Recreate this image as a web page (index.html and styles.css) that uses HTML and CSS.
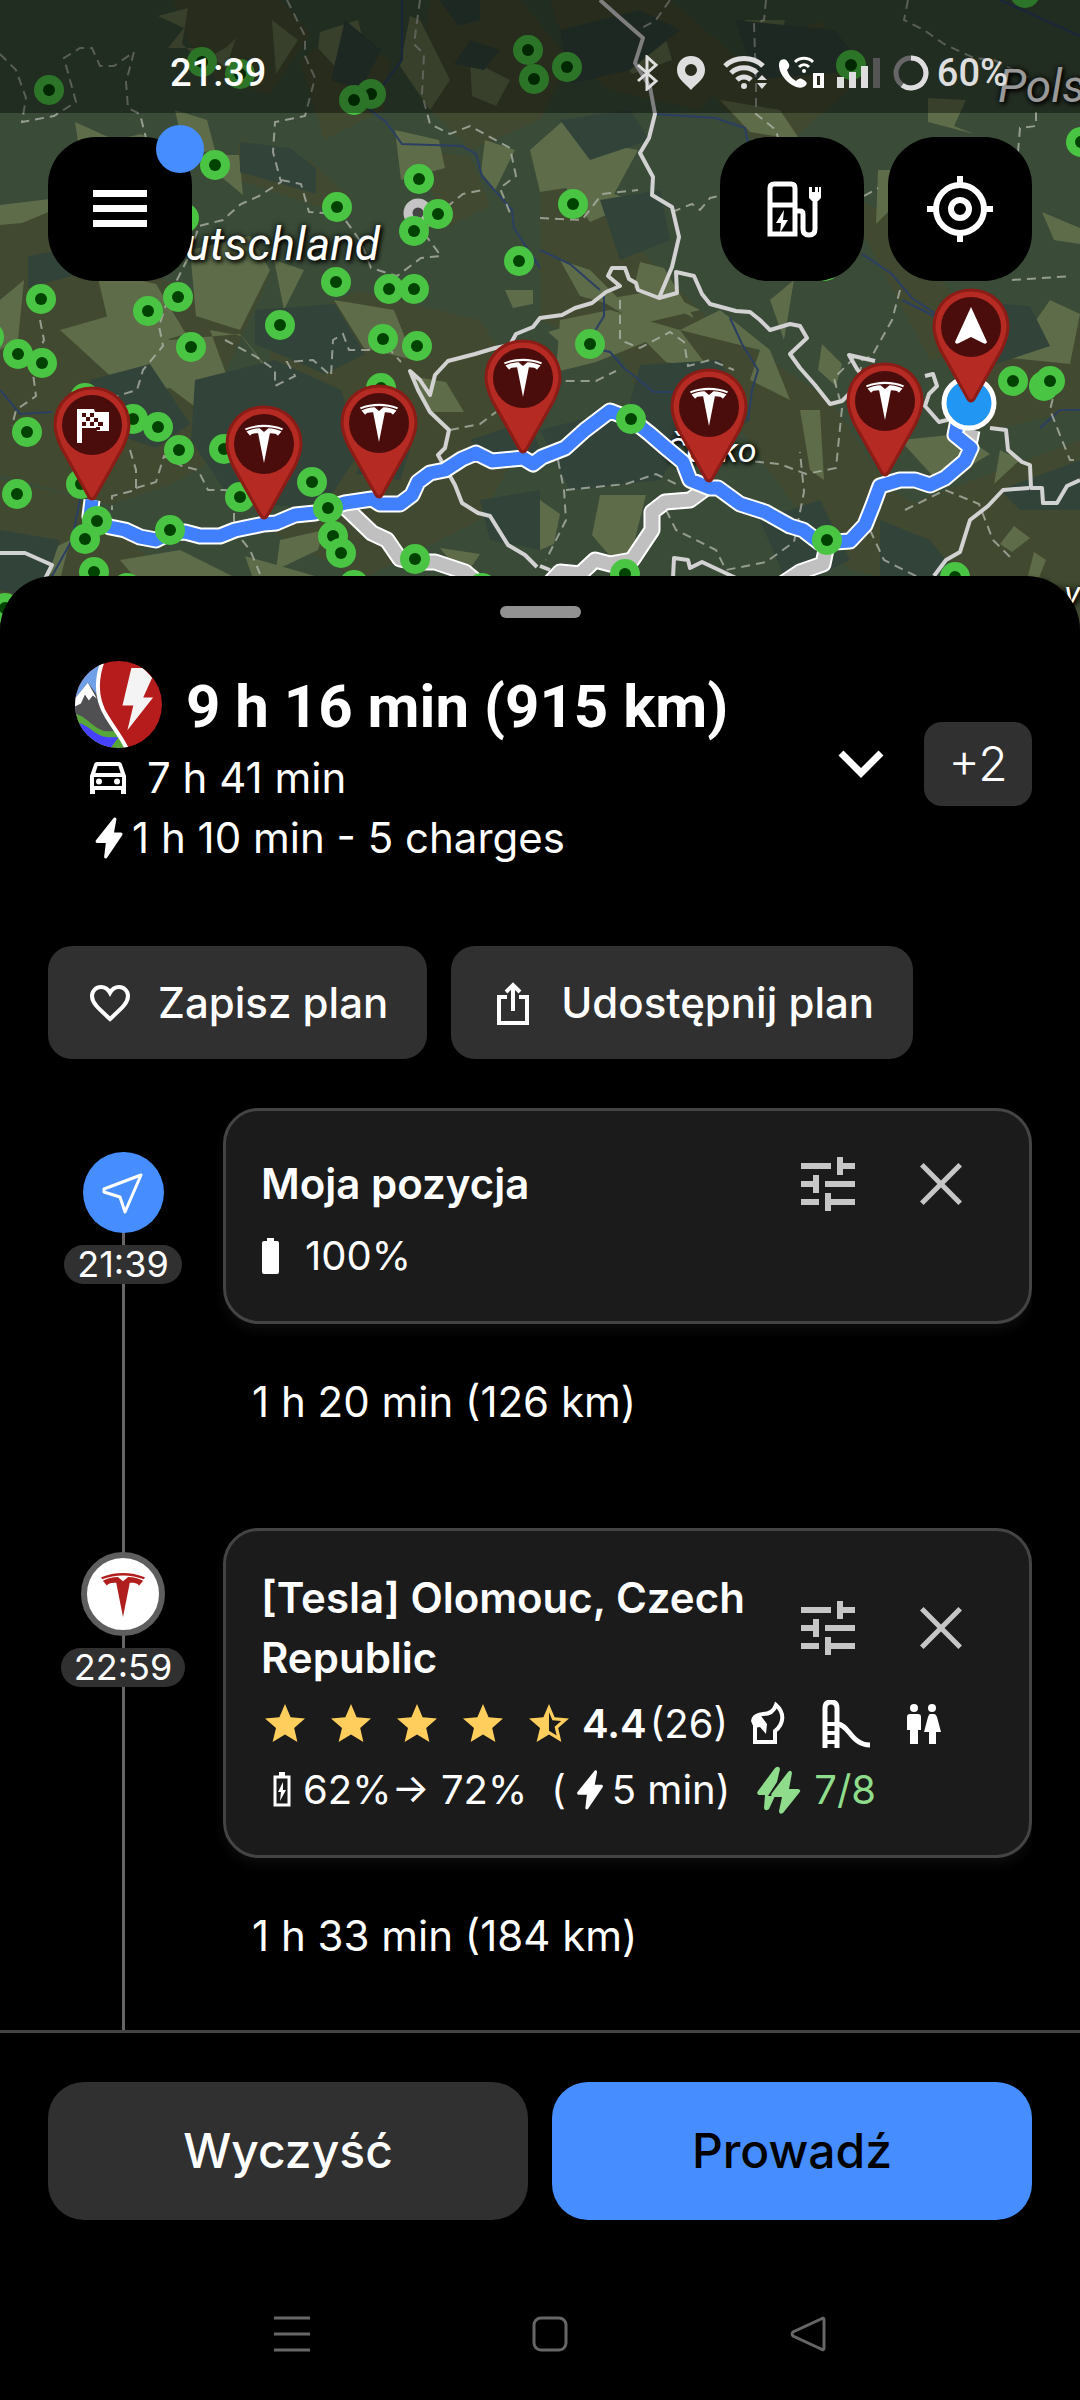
FILE: index.html
```html
<!DOCTYPE html>
<html lang="pl">
<head>
    <meta charset="UTF-8">
    <meta name="viewport" content="width=device-width, initial-scale=1.0">
    <title>Plan podróży</title>
    <link rel="stylesheet" href="styles.css">
</head>
<body>

<!-- Shared icons -->
<svg class="sprite" aria-hidden="true">
    <symbol id="i-tune" viewBox="0 0 24 24"><path d="M3 17v2h6v-2H3M3 5v2h10V5H3m10 16v-2h8v-2h-8v-2h-2v6h2M7 9v2H3v2h4v2h2V9H7m14 4v-2H11v2h10m-6-4h2V7h4V5h-4V3h-2v6z"/></symbol>
    <symbol id="i-close" viewBox="0 0 24 24"><path d="M19 6.2 17.8 5 12 10.8 6.2 5 5 6.2 10.8 12 5 17.8 6.2 19 12 13.2 17.8 19 19 17.8 13.2 12z"/></symbol>
    <symbol id="i-star" viewBox="0 0 24 24"><path d="M12 17.3 18.2 21l-1.6-7L22 9.2l-7.2-.6L12 2 9.200 8.600 2 9.200 7.500 14l-1.700 7z"/></symbol>
    <symbol id="i-star-half" viewBox="0 0 24 24"><path d="M12 15.400V6.100l1.700 4 4.400.400-3.300 2.900 1 4.300M22 9.200l-7.200-.600L12 2 9.200 8.600 2 9.200 7.500 14l-1.700 7 6.200-3.700 6.200 3.700-1.600-7z"/></symbol>
    <symbol id="i-bolt" viewBox="0 0 24 24"><path d="M14.600 2.300c.5-1 1.800-.6 1.600.5L15 9.200h3.300c.9 0 1.200.7.800 1.400L11.600 21.700c-.6.9-1.700.5-1.500-.5l.8-6.700H6.700c-.8 0-1.100-.7-.8-1.300z"/></symbol>
    <symbol id="i-tesla" viewBox="0 0 40 40"><path d="M1 5.500C13 .5 27 .5 39 5.500l-.8 1.700C27 2.800 13 2.800 1.800 7.200zM2.500 8.500C6 6.600 11 5.300 15.500 5.200L20 9l4.500-3.800c4.500.1 9.500 1.400 13 3.300l-3.600 4.300c-.7-1.900-3.500-2.600-8-2.600L20 40l-5.900-29.800c-4.500 0-7.300.7-8 2.600z"/></symbol>
    <symbol id="i-pin" viewBox="-40 -42 80 120"><path class="pin-body" d="M0-37c-21 0-37 16-37 37 0 8 3 15 6 22L-3 72q3 4 6 0l28-50c3-7 6-14 6-22 0-21-16-37-37-37z"/><circle class="pin-face" r="30"/></symbol>
    <symbol id="i-charger" viewBox="-15 -15 30 30"><circle r="15" fill="#4ac443"/><circle r="6" fill="#004300"/></symbol>
</svg>

<header class="map">
    <svg class="map-canvas" viewBox="0 0 1080 640" preserveAspectRatio="xMidYMin slice" role="img" aria-label="Mapa trasy">
        <defs>
            <path id="route" d="M92 500 90 516 97 521 110 527 125 530 140 537 156 540 170 533 185 532 200 536 220 536 235 530 264 524 276 523 295 515 315 513 328 508 345 503 372 499 380 504 400 504 412 495 418 482 430 473 445 470 462 459 476 453 492 461 523 458 533 464 542 457 565 448 585 430 610 411 631 419 650 434 665 447 683 462 690 480 710 488 718 488 740 504 765 512 790 526 803 530 820 543 850 541 865 525 873 505 880 486 900 480 915 480 930 485 945 478 965 461 971 448 955 435 958 420"/>
            <path id="alt" d="M346 508 372 533 387 540 400 559 415 562 435 562 465 572 489 592M709 486 690 500 665 502 652 512 652 530 632 560 610 564 595 560 580 574 560 572 545 588M827 545 823 564 800 572 776 588M972 430 968 450"/>
        </defs>
        <rect width="1080" height="640" fill="#3a4b38"/>
        <!-- Terrain -->
        <g fill="#414a30">
            <path d="M172 0l108 0 30 34-40 60-52-14-30-38zM300 60l40-30 50 30-6 50-60 30zM550 0l120 0 70 60-40 50-90-20-40-30zM700 80l120-60 40 60-90 80zM0 205l70 0 60 60 70 30 70-20-50 110 20 60-70 40-60 20-110-30zM240 140l70 20 42 40-30 8-90-30zM430 0l90 0 50 60-30 60-70 30-50-50z"/>
            <path d="M410 150l60 6 20 50-40 20zM540 180l50 20 60 60 60 60 120 80 60 90 60 30-10 70-90-20-60-70-70-100-180-80zM270 330l90-40 120 30 60 90-60 110-120 60-90-50 60-60-60-90zM0 480l90 20 80 80-40 60-130 0zM920 500l160-60 0 200-160 0-30-60zM960 340l120-20 0 90-90 20zM840 190l60 30 90 130-60 10zM600 310l120 10 40 70-110 30z"/>
        </g>
        <g fill="#5e6c49">
            <path d="M272 20l26 20-22 34zM158 16l30-8-6 36 20 18 26-16 8-8-10 30-26-20-32 0 16-20zM320 32l38-12 10 40-30 10-20-22zM420 20l30 60-20 30-30-44 10-50zM75 122l40 18 26-6 24 12-60 12-26-10zM175 110l32 10 8 30-30 6zM225 155l14 0 4 40-24-20zM395 130l44 10 6 28-44 12zM470 60l40 20-14 26-24-10zM485 140l30 10-20 40-14-18z"/>
            <path d="M530 150l34-30 30-4 10 28 34 6-24 44 22 8-46 20-24-34-26 4zM610 40l50-20 12 40-40 14zM745 20l40 0-10 38-28-8zM720 100l60 10 20 30-50-8zM928 98l38 2-12 26 20 8-46-12zM878 170l12 0 0 40-14 14zM1042 212l38 16 0 16-26-4zM0 205l50-6 20 4-48 20-22 2zM190 250l60-14 20 34-30 60-44-14zM96 270l60 14 30 50-70 20zM274 260l30 10-20 40zM505 290l28 0 0 14-20 4z"/>
            <path d="M60 330l70-20 40 30 70-6 30 40-40 10 30 40-50-6-40-30-40 6zM120 340l44 90-18 14-20-50zM0 300l24-20-6 60-18 10zM334 300l60 10 20 50-50-12zM410 376l36 6 18 30-34 0zM30 560l40-20-10 40zM120 560l60-10 60 30 14 60-70 0-30-40zM280 540l44-10-6 20-42 20zM245 556l70 20 10 14-70-6zM210 330l22 60 30 16 20-20-40-50zM440 548l40 6-16 24z"/>
            <path d="M560 320l50-10 70 20 30 40-44-8-20-20-50 20-40 10zM600 300l60-10 40 20-60 14zM680 330l80 20-10 30 40 20-20-50-50-40zM800 410l20 0 4 70-14-10zM770 300l24-20-10 60zM822 344l20 20-6 22-18-16zM600 495l46 0-10 40-10 40-34-40zM540 500l20 14-6 30-14 6zM548 332l20-6-4 20zM900 440l60-6 30 20-50 30zM1000 544l14-18 16 12-18 14zM1034 552l12 8-8 20-10-4zM1050 300l30 14-10 50-60-6zM560 260l30 10 40 40-50-14zM640 262l24 6 30 50-60-30zM1000 450l20 10-26 24z"/>
        </g>
        <g fill="#32433a">
            <path d="M240 142l50 6 26 20 0 26-76-22zM28 256l44-8 6 26-50 14zM90 380l60-16 40 60-34 24-60-20zM255 310l80-6 30 50-40 20-70-30zM195 380l80-20 66 30 20 60-40 60-90-10-40-60zM345 20l36 30-20 40-30-10zM440 0l40 0 0 20-22 6zM560 30l80-20 40 20-50 40-60 14zM735 20l100 10 30 40-110 10zM600 200l60-10 10 50-50 20zM560 120l70-10 20 30-60 20zM470 40l30 10-16 20-30-6z"/>
            <path d="M640 365l80-5 30 60-40 30-90-10zM540 430l80-20 60 40-20 30-90 10zM880 520l50 20 40 50-90 20zM760 520l60-20 30 60-60 30zM940 300l90 6 20 40-60 20zM1000 490l80-30 0 50-60 0zM480 500l60-10 0 60-50-10zM470 440l60-20 10 30-40 20zM370 440l40 10-10 30-44-6zM0 530l60 10-20 60-40-10zM860 370l40 30-30 40-20-30z"/>
        </g>
        <!-- Rivers -->
        <g fill="none" stroke="#2b3f63" stroke-width="2">
            <path d="M402 0v60l-18 24-14 26 16 12 16 22 60 2 14 8 6 22 30 34 2 18 26 40M0 390l20 24 32-2M80 460v40l-8 40-20 36M655 114l60 4 30 10 10 50M604 296v20l-12 20v12l18 4 14 16 30 24h20M730 318l12 26 16 26-6 20-4 30M862 254l30 20 20 24 30 20 30 8M1000 0l80 36M1080 410h-20l-20 18M540 250l30 14 30 26M902 300l40 20"/>
        </g>
        <!-- Regions -->
        <g class="region-lines">
            <path d="M0 54l16 16 10 28-4 24 32-6 22-14-12-44 16-10h12l8 18h14l20-14-8 30 2 26 12 6 6 24 20 16M287 0l18 36 0 20 10 22-10 38-30 6-2 30 8 30-22 14-18 8-18 16-24 6-10 30-20 40-10 30 4 20-20 24-6 20-20 6-6 16-20 6-12 28M420 0l-6 44 10 10-2 40 8 30 20 10 20-8 40 22 6 28-16 12 12 30M281 180l20 4 8 28 32 2 20 28 10 26 26 8 24-18 20-2-18-24 20-22 20-16 20-4M225 340l30 16 20 14 0 16 20-10-8-14 26-2 18 16 2-36 10-6 6 16h20l14-8 18 20M40 320l4 20-12 26 4 30-20 14-4 16M130 450l6 20 0 20-24 6 0 14M136 488l20-6 8-26 18 10 16 4 10 20h18l8 20 0 20 16 20 10 24M450 430l30-6 16-12"/>
            <path d="M670 0l-14 20-14 8M766 0l-2 20-10 4 2 60 0 30 20 16 2 8M908 0l-4 20 20 10 20 14 30 14 20 2 40 20M1036 112l0 14-16 2-2 24M540 218l42 2 20-26 36-4M672 212l20-8 8 6 10-12 18-4M864 196l14-8M900 290l-8 30-20 36-10 4-6 40M1012 280l60-4M620 300l0 40 20 8 30-16 14 10 4 24 22-6 24 10M540 395l20-14h36l20-10M558 460l6 30 2 30-20 40M566 490l60-6 30-10 20 10M666 510l10 20 40 20 10 20 40-8 28-20 10-50-4-40M740 460l40 4 26 10 30-6 6-60-8-30 20-20M870 530l14 30 40 20M905 510l40-20 34 14 14 36 20 20M1060 370l-10 40 20 50 10 0"/>
        </g>
        <!-- Country borders -->
        <g class="border-lines">
            <path d="M600 0 619 17 643 38 635 63 650 87 655 114 649 138 640 153 653 177 652 195 672 207 679 237 672 267 659 298 638 290 636 283 629 279 625 268 612 268 608 276 620 286 606 292 592 303 575 308 562 315 540 318 533 327 516 334 510 345 495 348 475 354 448 361 435 375 430 395 420 380 410 371 418 390 430 412 449 430 445 448 438 455 455 485 462 503 478 513 490 516 508 545 525 555 537 567"/>
            <path d="M659 298l18-5-1-21 18 4 8 18 8 10 26 7 14 1 10 8 10 10 20-6 10 2 7 12-17 16 10 14 15 17 15 19 12-3 12-12M875 361l-26-6 8 14 8 10M925 376l8-2 4 12-8 8-4 12 14 16 16-4M990 428l16 2 2 20 14 12 8 3 1 23h11l1 15h14l10-17 13-6M1029 488l-26 2-15 16-18 14-10 32-14 8-12 16M0 553h25l27 12-8 16M673 578l1-20 14 2 2 8 12-6 34 16M540 566l10 4"/>
        </g>
        <text class="country country-m" x="665" y="462">Česko</text>
        <!-- Alternative and main route -->
        <use href="#alt" class="casing"/>
        <use href="#alt" class="alt-line"/>
        <use href="#route" class="casing"/>
        <use href="#route" class="route-line"/>
        <!-- Chargers -->
        <g id="chargers"></g>
        <circle cx="969" cy="403" r="25" fill="#2196f3" stroke="#fff" stroke-width="5"/>
        <g id="pins"></g>
        <g fill="#fff">
            <path d="M78 409h16l1 3h14v19H97l-1-3H82v15h-5v-34z"/>
            <path d="M971 307l16 35q-1 3-4 1l-12-6-12 6q-3 2-4-1z"/>
        </g>
        <path fill="#4a0d0b" d="M82 413h4v4h-4zm8 0h4v4h-4zm-4 4h4v4h-4zm8 1h4v4h-4zm-12 4h4v4h-4zm8 0h4v4h-4zm8 0h5v4h-5zm-2 5h4v3h-4z"/>
        <text class="country country-l" x="380" y="260" text-anchor="end">Deutschland</text>
        <text class="country country-l" x="998" y="102">Polska</text>
        <text class="country country-m" x="1018" y="605">Slovensko</text>
    </svg>

    <div class="status-bar">
        <time>21:39</time>
        <div class="status-icons">
            <svg class="wide" width="22" height="36" viewBox="0 0 22 36" fill="none" stroke="#dedede" stroke-width="3"><path d="M1 10l18 16-9 8V2l9 8L1 26"/></svg>
            <svg class="wide" width="28" height="36" viewBox="0 0 28 36" fill="#dedede"><path fill-rule="evenodd" d="M14 1C6 1 0 7 0 15c0 9 8 13 14 20 6-7 14-11 14-20C28 7 22 1 14 1zm0 8a6 6 0 1 1 0 12 6 6 0 0 1 0-12z"/></svg>
            <svg width="44" height="36" viewBox="0 0 44 36"><g fill="none" stroke="#dedede" stroke-width="5"><path d="M2 11c10-10 28-10 38 0M8 18c7-7 19-7 26 0M14 25c4-4 10-4 14 0"/></g><g fill="#dedede"><circle cx="21" cy="31" r="3"/><path d="M34 25l5-5 5 5zM34 28h10l-5 6z"/></g></svg>
            <svg width="46" height="36" viewBox="0 0 46 36"><path fill="#fff" d="M2 5c4-2 6 0 8 4 1 3-1 5-2 6 2 5 4 8 9 11 2-2 4-3 6-2 4 2 6 4 4 6-3 4-9 3-14 0C5 25 0 17 0 10c0-3 1-4 2-5z"/><g fill="none" stroke="#fff" stroke-width="3"><path d="M16 7c5-5 13-5 18 0M20 12c3-3 7-3 10 0"/></g><circle cx="25" cy="16" r="2" fill="#fff"/><path fill="#fff" fill-rule="evenodd" d="M34 18h11v15H34zm4 3v9h3v-9z"/></svg>
            <svg width="44" height="36" viewBox="0 0 44 36" fill="#dedede"><path d="M0 22h7v11H0zM12 17h7v16h-7zM24 11h7v22h-7z"/><path fill="#555" d="M36 3h7v30h-7z"/></svg>
            <svg width="36" height="36" viewBox="0 0 36 36" fill="none" stroke-width="5"><circle cx="18" cy="18" r="15" stroke="#666"/><path stroke="#dedede" d="M18 3a15 15 0 1 1-8.800 27.200"/></svg>
            <span>60%</span>
        </div>
    </div>

    <nav class="map-controls" aria-label="Mapa">
        <button class="map-btn has-dot" aria-label="Menu">
            <svg width="54" height="54" viewBox="0 0 54 54" fill="#fff"><path d="M0 8h54v7H0zM0 23h54v7H0zM0 38h54v7H0z"/></svg>
        </button>
        <button class="map-btn push" aria-label="Ładowarki">
            <svg width="56" height="56" viewBox="-3 0 56 56" overflow="visible"><g fill="none" stroke="#fff" stroke-width="5"><path d="M3 53V7q0-4 4-4h17q4 0 4 4v46zM3 24h25M28 30h5q3 0 3 3v15q0 6 6 6t6-6V18"/></g><path fill="#fff" d="M42 13V6h3v5h3V6h3v5h1v-5h2v11l-3 3h-6l-3-3zM17 29l-8 13h5l-1 10 8-13h-5z"/></svg>
        </button>
        <button class="map-btn" aria-label="Moja lokalizacja">
            <svg width="66" height="66" viewBox="0 0 66 66" fill="none" stroke="#fff" stroke-width="6"><circle cx="33" cy="33" r="24"/><circle cx="33" cy="33" r="9"/><path d="M33 0v9M33 57v9M0 33h9M57 33h9"/></svg>
        </button>
    </nav>
</header>

<main class="sheet">
    <div class="handle"></div>

    <section class="summary">
        <div class="summary-main">
            <h1>
                <svg width="87" height="87" viewBox="0 0 88 88">
                    <clipPath id="disc"><circle cx="44" cy="44" r="44"/></clipPath>
                    <g clip-path="url(#disc)">
                        <path fill="#b51c1b" d="M0 0h88v88H0z"/>
                        <path fill="#6f9fe6" d="M0 0h28c-8 22-6 40 4 56L0 60z"/>
                        <path fill="#505052" d="M0 38l13-16 9 12c2 9 5 15 10 22 10 16 14 20 20 32H0z"/>
                        <path fill="#fff" d="M0 38l13-16 9 16-4-3-4 5-4-6-4 9-6 3z"/>
                        <path fill="#57a639" d="M0 53c14 4 20 18 34 18l10 0q6 10 8 17H0z"/>
                        <path fill="#4640ff" d="M0 62c16 2 20 16 36 15l8 0-8 11H0z"/>
                        <path fill="none" stroke="#fff" stroke-width="4" d="M28 0c-8 22-6 40 4 56s14 20 20 32"/>
                        <path fill="#f4f4f4" d="M57 7h12l9 10-9 20h10L53 70l6-25H48z"/>
                    </g>
                </svg>
                <span>9 h 16 min (915 km)</span>
            </h1>
            <p class="summary-line drive">
                <svg width="48" height="48" viewBox="0 0 24 24" fill="#fff"><path fill-rule="evenodd" d="M18.900 5c-.2-.6-.8-1-1.400-1h-11c-.6 0-1.200.4-1.400 1L3 11v9h2.500v-2h13v2H21v-9zM6.800 6h10.400l1.100 3.500H5.700zM19 16H5v-4.500h14zM7.500 12.200a1.500 1.500 0 1 1 0 3 1.500 1.500 0 0 1 0-3m9 0a1.500 1.500 0 1 1 0 3 1.500 1.500 0 0 1 0-3"/></svg>
                7 h 41 min
            </p>
            <p class="summary-line">
                <svg width="48" height="48" fill="#fff"><use href="#i-bolt"/></svg>
                1 h 10 min - 5 charges
            </p>
        </div>
        <button class="expand" aria-label="Rozwiń">
            <svg width="48" height="30" viewBox="0 0 48 30" fill="none" stroke="#fff" stroke-width="7"><path d="M4 4l20 20L44 4"/></svg>
        </button>
        <button class="more">+2</button>
    </section>

    <div class="plan-actions">
        <button class="plan-btn">
            <svg width="48" height="48" viewBox="0 0 24 24" fill="none" stroke="#fff" stroke-width="2"><path d="M12 20C6 14.500 3 12 3 8.500 3 6 5 4 7.500 4 9.300 4 11 5 12 6.900 13 5 14.700 4 16.500 4 19 4 21 6 21 8.500c0 3.500-3 6-9 11.500z"/></svg>
            Zapisz plan
        </button>
        <button class="plan-btn">
            <svg width="48" height="48" viewBox="0 0 24 24" fill="none" stroke="#fff" stroke-width="2"><path d="M9 9H5v13h14V9h-4M12 16V3M8.500 6.500 12 3l3.500 3.500"/></svg>
            Udostępnij plan
        </button>
    </div>

    <ol class="stops">
        <li class="stop">
            <div class="rail rail-start">
                <span class="badge">
                    <svg width="42" height="42" viewBox="0 0 42 42" fill="none" stroke="#fff" stroke-width="3" stroke-linejoin="round"><path d="M39 3 2 17v3l16 5 5 15z"/></svg>
                </span>
                <time>21:39</time>
            </div>
            <div class="stop-body">
                <article class="card">
                    <div class="card-head">
                        <h2>Moja pozycja</h2>
                        <button class="icon-btn" aria-label="Ustawienia"><svg><use href="#i-tune"/></svg></button>
                        <button class="icon-btn" aria-label="Usuń"><svg><use href="#i-close"/></svg></button>
                    </div>
                    <p class="card-row battery">
                        <svg width="20" height="36" viewBox="0 0 20 36" fill="#fff"><path d="M1 5q0-2 2-2h3V0h7v3h3q2 0 2 2v29q0 2-2 2H3q-2 0-2-2z"/></svg>
                        100%
                    </p>
                </article>
                <p class="leg">1 h 20 min (126 km)</p>
            </div>
        </li>
        <li class="stop">
            <div class="rail">
                <span class="badge badge-tesla"><svg width="46" height="46" fill="#b01f1e"><use href="#i-tesla"/></svg></span>
                <time>22:59</time>
            </div>
            <div class="stop-body">
                <article class="card">
                    <div class="card-head">
                        <h2>[Tesla] Olomouc, Czech Republic</h2>
                        <button class="icon-btn" aria-label="Ustawienia"><svg><use href="#i-tune"/></svg></button>
                        <button class="icon-btn" aria-label="Usuń"><svg><use href="#i-close"/></svg></button>
                    </div>
                    <div class="card-row">
                        <span class="stars">
                            <svg><use href="#i-star"/></svg>
                            <svg><use href="#i-star"/></svg>
                            <svg><use href="#i-star"/></svg>
                            <svg><use href="#i-star"/></svg>
                            <svg><use href="#i-star-half"/></svg>
                        </span>
                        <b class="score">4.4</b>(26)
                        <span class="amenities">
                            <svg viewBox="0 0 48 48"><path fill="none" stroke="#fff" stroke-width="4" d="M11 22v20h20V31c9-7 10-18 1-26-2 6-7 9-13 9-5 0-8 3-8 7"/><path fill="#fff" d="M7 21q1-7 8-8l8 11-1 10-6-7-6 1z"/></svg>
                            <svg viewBox="0 0 48 48"><g fill="none" stroke="#fff" stroke-width="4"><path stroke-width="5" d="M3 48V8q0-6 6-6t6 6v40"/><path d="M3 24h14M3 33h12M3 42h12"/><path stroke-width="5" d="M15 24c12 0 14 21 33 21"/></g></svg>
                            <svg viewBox="0 0 48 48" fill="#fff"><circle cx="14" cy="8" r="4"/><circle cx="32" cy="8" r="4"/><path d="M10 14h8q3 0 3 3v13h-3v14h-8V30H7V17q0-3 3-3zM30 14h4q2 0 3 3l4 15h-5v12h-7V32h-5l4-15q1-3 2-3z"/></svg>
                        </span>
                    </div>
                    <div class="card-row">
                        <svg width="42" height="42" viewBox="0 0 42 42"><path fill="none" stroke="#fff" stroke-width="3" d="M14 8h14v28H14z"/><path fill="#fff" d="M18 3h6v4h-6zM22 13l-5 10h3l-1 9 6-11h-3z"/></svg>
                        <span>62%→ 72%</span>
                        <span class="charge-time">(<svg width="46" height="46"><use href="#i-bolt"/></svg>5 min)</span>
                        <span class="available">
                            <svg width="48" height="48" viewBox="0 0 48 48"><path d="M21 2q4-3 5 1l-3 13-9 14h7l-6 13q-4 3-5-1l1-13H5q-3-1-1-4z"/><path d="M34 6q3-3 4 1l-3 16h9q4 1 1 4L29 47q-4 2-4-2l3-14h-9q-3-1-1-4z"/></svg>
                            7/8
                        </span>
                    </div>
                </article>
                <p class="leg">1 h 33 min (184 km)</p>
            </div>
        </li>
    </ol>
</main>

<footer class="actions">
    <button class="clear">Wyczyść</button>
    <button class="go">Prowadź</button>
</footer>

<nav class="system-nav" aria-label="System">
    <button aria-label="Ostatnie"><svg viewBox="0 0 36 36"><path d="M0 2h36M0 18h36M0 34h36"/></svg></button>
    <button aria-label="Ekran główny"><svg viewBox="0 0 36 36"><rect x="2" y="2" width="32" height="32" rx="7"/></svg></button>
    <button aria-label="Wstecz"><svg viewBox="0 0 36 36"><path d="M34 4v28q0 3-3 1L3 20q-2-2 0-4L31 3q3-2 3 1z"/></svg></button>
</nav>

<script src="map.js"></script>
</body>
</html>
```

FILE: styles.css
```css
* {
    box-sizing: border-box;
}

body {
    margin: 0;
    height: 100vh;
    display: flex;
    flex-direction: column;
    background: #000;
    color: #fff;
    font-family: Inter, Roboto, sans-serif;
    font-size: 42px;
    line-height: 60px;
}

h1, h2, p, ol {
    margin: 0;
    padding: 0;
}

ol {
    list-style: none;
}

svg {
    flex: none;
    display: block;
}

button {
    border: none;
    padding: 0;
    background: none;
    color: inherit;
    font: inherit;
    cursor: pointer;
    display: flex;
    align-items: center;
    justify-content: center;
}

.sprite {
    position: absolute;
    width: 0;
    height: 0;
}

/* Map */
.map {
    position: relative;
    flex: none;
    height: 640px;
    overflow: hidden;
}

.map-canvas {
    position: absolute;
    width: 100%;
    height: 100%;
}

.pin-body {
    fill: #b52a22;
    stroke: #8b1c16;
    stroke-width: 3;
}

.pin-face {
    fill: #4a0d0b;
}

.region-lines {
    fill: none;
    stroke: #b4b8ae;
    stroke-width: 2;
    stroke-dasharray: 9 6;
    opacity: 0.75;
}

.border-lines {
    fill: none;
    stroke: #d2d2d2;
    stroke-width: 4;
    stroke-linejoin: round;
}

.casing, .alt-line, .route-line {
    fill: none;
    stroke: #fff;
    stroke-width: 17;
    stroke-linejoin: round;
}

.alt-line {
    stroke: #c0c0c0;
    stroke-width: 13;
}

.route-line {
    stroke: #4080ff;
    stroke-width: 13;
}

.country {
    font-family: Roboto, sans-serif;
    font-style: italic;
    fill: #fff;
    text-shadow: 0 0 6px #000, 2px 2px 4px #000;
}

.country-l {
    font-size: 46px;
}

.country-m {
    font-size: 34px;
}

.status-bar {
    position: relative;
    display: flex;
    align-items: center;
    justify-content: space-between;
    height: 113px;
    padding: 32px 72px 0 170px;
    background: rgba(0, 0, 0, 0.4);
    font: 500 38px/48px Roboto, sans-serif;
}

.status-icons {
    display: flex;
    align-items: center;
    gap: 12px;
    color: #dedede;
}

.status-icons .wide {
    margin-right: 6px;
}

.status-icons span {
    margin-left: -4px;
}

.map-controls {
    position: relative;
    display: flex;
    gap: 24px;
    padding: 24px 48px;
}

.map-btn {
    position: relative;
    width: 144px;
    height: 144px;
    border-radius: 48px;
    background: #000;
}

.push {
    margin-left: auto;
}

.has-dot::after {
    content: "";
    position: absolute;
    top: -12px;
    right: -12px;
    width: 48px;
    height: 48px;
    border-radius: 50%;
    background: #468eff;
}

/* Bottom sheet */
.sheet {
    position: relative;
    display: flex;
    flex-direction: column;
    flex: 1;
    min-height: 0;
    margin-top: -64px;
    padding: 30px 48px 0;
    border-radius: 54px 54px 0 0;
    background: #000;
}

.handle {
    flex: none;
    align-self: center;
    width: 81px;
    height: 12px;
    border-radius: 6px;
    background: #929292;
}

.summary {
    display: flex;
    align-items: center;
    margin-top: 42px;
}

.summary-main {
    flex: 1;
    padding-left: 27px;
}

.summary h1 {
    display: flex;
    align-items: center;
    gap: 24px;
    height: 88px;
    font: 700 60px/84px Roboto, sans-serif;
}

.summary h1 span {
    padding-top: 5px;
}

.summary-line {
    display: flex;
    align-items: center;
    padding-left: 9px;
}

.drive {
    gap: 15px;
}

.expand {
    margin-right: 39px;
}

.more {
    width: 108px;
    height: 84px;
    border-radius: 18px;
    background: #303030;
    font-size: 48px;
    font-weight: 300;
}

.plan-actions {
    display: flex;
    gap: 24px;
    margin-top: 78px;
}

.plan-btn {
    gap: 24px;
    height: 113px;
    padding: 0 39px 0 38px;
    border-radius: 24px;
    background: #303030;
    font-weight: 500;
}

/* Stops */
.stops {
    flex: 1;
    min-height: 0;
    margin-top: 49px;
    overflow: hidden;
}

.stop {
    display: flex;
    gap: 25px;
}

.rail {
    display: flex;
    flex-direction: column;
    align-items: center;
    gap: 12px;
    width: 150px;
    padding-top: 24px;
    background: linear-gradient(#666, #666) center / 3px 100% no-repeat;
}

.rail-start {
    padding-top: 44px;
    background-position: center 44px;
}

.badge {
    display: flex;
    align-items: center;
    justify-content: center;
    width: 81px;
    height: 81px;
    border-radius: 50%;
    background: #468eff;
}

.badge-tesla {
    width: 84px;
    height: 84px;
    border: 6px solid #5e5e5e;
    background: #fff;
}

.rail time {
    padding: 0 13px;
    border-radius: 20px;
    background: #303030;
    font-size: 36px;
    line-height: 39px;
}

.stop-body {
    flex: 1;
}

.card {
    padding: 37px 52px 35px 35px;
    border: 3px solid #444;
    border-radius: 36px;
    background: #1b1b1b;
    box-shadow: 0 6px 12px #0d0d0d;
}

.card-head {
    display: flex;
    align-items: center;
    gap: 41px;
    min-height: 72px;
}

.card-head h2 {
    flex: 1;
    margin-right: -20px;
    font-size: 42px;
    font-weight: 600;
}

.icon-btn svg {
    width: 72px;
    height: 72px;
    fill: #c6c6c6;
}

.card-row {
    display: flex;
    align-items: center;
    height: 60px;
    margin-top: 6px;
    font-size: 40px;
    white-space: nowrap;
}

.battery {
    gap: 24px;
}

.stars {
    display: flex;
    gap: 18px;
    margin-right: 9px;
    fill: #ffce5c;
}

.stars svg, .amenities svg {
    width: 48px;
    height: 48px;
}

.score {
    margin-right: 3px;
    font-weight: 600;
}

.amenities {
    display: flex;
    gap: 30px;
    margin-left: 16px;
}

.charge-time, .available {
    display: flex;
    align-items: center;
    margin-left: 24px;
    fill: #fff;
}

.available {
    gap: 12px;
    color: #8fdc8c;
    fill: #8fdc8c;
}

.leg {
    padding: 48px 0 96px 29px;
}

/* Bottom bars */
.actions {
    display: flex;
    gap: 24px;
    padding: 49px 48px 48px;
    border-top: 3px solid #444;
}

.actions button {
    flex: 1;
    height: 138px;
    border-radius: 36px;
    font-size: 48px;
    font-weight: 500;
}

.clear {
    background: #303030;
}

.actions .go {
    background: #468eff;
    color: #000;
}

.system-nav {
    display: flex;
    align-items: center;
    justify-content: center;
    gap: 222px;
    height: 132px;
    padding-left: 20px;
}

.system-nav svg {
    width: 36px;
    height: 36px;
    fill: none;
    stroke: #666;
    stroke-width: 3;
}
```

FILE: map.js
```js
const SVG_NS = 'http://www.w3.org/2000/svg';

const chargers = [
    [49, 90], [202, 62], [240, 74], [371, 94], [354, 100], [528, 50], [534, 79], [567, 67], [215, 165],
    [419, 179], [337, 207], [438, 214], [414, 231], [519, 261], [336, 282], [389, 289], [414, 289],
    [41, 299], [178, 297], [148, 311], [184, 218], [1025, -7], [851, 65], [1081, 142], [573, 204],
    [825, 266], [191, 347], [280, 325], [18, 354], [42, 363], [-11, 337], [383, 339], [417, 346],
    [27, 432], [133, 419], [158, 427], [179, 450], [224, 449], [240, 497], [312, 482], [328, 508],
    [333, 536], [341, 553], [415, 559], [170, 530], [97, 521], [85, 539], [94, 572], [17, 494],
    [85, 398], [81, 484], [381, 388], [5, 608], [127, 588], [482, 588], [354, 585], [590, 344],
    [631, 419], [827, 540], [625, 574], [955, 577], [1013, 381], [1044, 386], [1050, 381]
];

// x and y of the pin head, true when it is a Tesla charger
const pins = [
    [92, 425, false], [264, 444, true], [379, 423, true], [523, 378, true],
    [709, 407, true], [885, 401, true], [971, 327, false]
];

function addUse(parent, id, x, y, width, height) {
    const use = document.createElementNS(SVG_NS, 'use');
    use.setAttribute('href', id);
    use.setAttribute('x', x);
    use.setAttribute('y', y);
    use.setAttribute('width', width);
    use.setAttribute('height', height);
    parent.appendChild(use);
    return use;
}

const chargerLayer = document.getElementById('chargers');

// Charger that is out of service
const closed = document.createElementNS(SVG_NS, 'circle');
closed.setAttribute('cx', 418);
closed.setAttribute('cy', 213);
closed.setAttribute('r', 10);
closed.setAttribute('fill', '#444');
closed.setAttribute('stroke', '#c4c4c4');
closed.setAttribute('stroke-width', 9);
chargerLayer.appendChild(closed);

chargers.forEach(([x, y]) => addUse(chargerLayer, '#i-charger', x - 15, y - 15, 30, 30));

const pinLayer = document.getElementById('pins');
pins.forEach(([x, y, tesla]) => {
    addUse(pinLayer, '#i-pin', x - 40, y - 42, 80, 120);
    if (tesla) {
        addUse(pinLayer, '#i-tesla', x - 20, y - 21, 40, 40).setAttribute('fill', '#fff');
    }
});
```
